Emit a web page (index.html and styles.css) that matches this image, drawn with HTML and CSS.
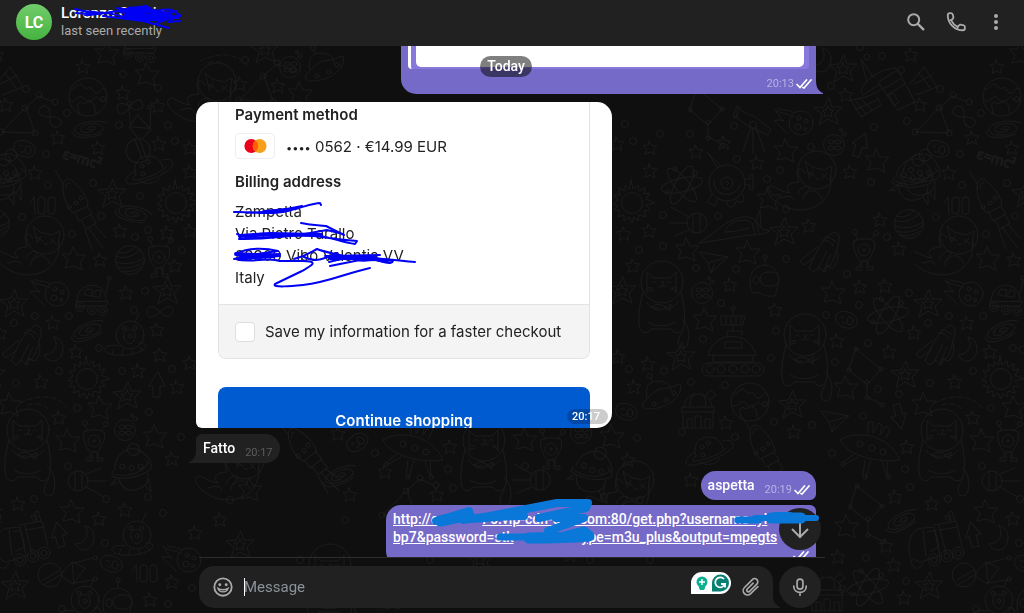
FILE: index.html
```html
<!DOCTYPE html>
<html lang="en">
<head>
<meta charset="utf-8">
<meta name="viewport" content="width=device-width, initial-scale=1">
<title>Chat</title>
<link rel="stylesheet" href="styles.css">
</head>
<body>
<svg class="wallpaper" aria-hidden="true">
  <defs>
    <g id="dot"><circle r="3.5"/></g>
    <g id="star"><path d="M-1-7 1.500-2.500 7-2 3.500 1.500 4.500 6.500 0 4-5 6.500-3.500 1-7-2.500-2-3z"/></g>
    <g id="star-m"><path d="M-1-12 3-4 12-4 6 3 8 11 0 7-9 9-6 1-12-5-4-5z"/></g>
    <g id="star-d"><path d="M1-14 4-5 14-5 7 2 10 12 0 7-9 13-6 2-14-4-4-5z"/><path d="M0-6 2-2 6-2 3 1 4 5 0 3-4 5-3 1-6-2-2-2z"/></g>
    <g id="earth"><circle r="19"/><path d="M-17-8c5 1 5-4 9-5s2 6 8 4 4 6 9 5 4-7 8-4M-18 3c5 5 7-5 12-3s2 5 8 4 4-7 9-2 4 2 7-1M-9 17c0-6-3-9 0-11s4 2 7 0 6-2 8 2-1 8 3 9"/><circle cx="15" cy="2" r="2.500"/></g>
    <g id="galaxy"><path d="M-3 1c2-4 10-3 8 0S-9 7-9 1 12-7 13 0-12 10-15 3 4-10 17-5M-18 3c-1 9 20 7 30 3M3 1c-1 1-3 1-5 0"/></g>
    <g id="planet"><circle r="14.500"/><path d="M-14-4c8 4 18 0 24-6M-12-8c6 2 12 0 17-5M-14 2c12 4 22 0 28-4M-13 7c10 3 20 0 26-5M-9 11c7 2 14 0 20-4"/></g>
    <g id="saturn"><path d="M-14 5c-4-12 4-19 13-19 8 0 13 6 14 12M-10 11c6 4 15 3 20-3"/><path d="M-15 1c-10 5-12 13-5 13 10 1 45-12 43-21-1-4-6-4-11-3M-14 5c-4 3-4 5-1 5 9 0 28-8 31-13"/><circle cx="-8" cy="-4" r="2"/><circle cx="-2" cy="-8" r="2"/><circle cx="-7" cy="4" r="2"/></g>
    <g id="sun"><circle r="10.500"/><path d="M-1-23 1-14 6-18 7-12 13-15 12-9 18-10 14-4 23 0 14 2 18 7 12 8 14 14 7 12 6 18 2 14 0 20-3 14-8 18-8 12-14 14-12 8-18 7-14 3-19 1-14-3-18-8-12-8-13-15-7-12-7-18-3-14z"/></g>
    <g id="alien"><path d="M-10-9c5-3 16-3 20 0 3 8-4 15-6 20v6h5v3H3v-9h-5v9h-6v-3h4v-6c-4-5-8-14-6-20zM-6-10-9-16M6-10 11-15"/><circle r="6"/><circle r="1"/><circle cx="-9" cy="-18" r="2.500"/><circle cx="12" cy="-17" r="2.500"/><path d="M-2 10c1 1 3 1 4 0"/></g>
    <g id="cat"><circle cy="-15" r="21"/><path d="M-15-4V-25l6 6H8l6-6v21M-10-14c1-2 3-2 4 0M5-14c1-2 3-2 4 0M-1-15h3l-2 3c-1 3-3 2-4 1M0-12c1 3 3 2 4 1M-14-9h5M-14-6l5-1M9-9h5M9-8l5 2M-19-5c-3 11-6 27-3 37 3 5 8 5 11 0H9c3 5 9 5 12 0 3-11 1-25-2-37M-16 5c4 6 10 7 14 6M16 5c-4 6-10 7-14 6M-10 10c5-4 9-3 14 0l5-3-1 7-5-3c-5 3-9 3-13-1zM-14 25c8 5 19 5 27 0M20 22c10 8 8 29 1 29s-6-10 0-17"/></g>
    <g id="catfly"><circle cx="5" cy="-10" r="19"/><path d="M-3-4-7-19l7 6 12 3 8-4-2 15M-4-8l7 4M1-9l-4 7M10-6l6 5M15-7l-5 6M4-2l2 2 2-2M-7-7c-9-11-9 2-6 9-8 0-16 4-9 11-11-1-19-11-22-5s10 17 20 20c23 7 45-6 43-31M-14 14c1-6 8-10 12-6-8 8-7 10-7 12M-7 15c8-8 13-4 17 4M-18 20c-3-7-11-2-14-2"/></g>
    <g id="rocket"><path d="M-12-14c0-8 4-11 8-8 9 6 17 18 17 26L-2 11c-5-5-10-14-10-25zM-9-14c0-4 2-6 4-5M0 11l4 8 13-7-5-8M6 18l5 9 10-6-5-8M10 28l7 19M14 26l14 20M19 22l12 14M-12-18-20-32"/><circle cx="-6" cy="5" r="2"/><circle cx="1" cy="1" r="2"/><circle cx="6" cy="-4" r="2"/></g>
    <g id="shuttle"><path d="M-14 13C-7-4 2-20 12-23c5 2 5 8 2 16-2 9-4 14-8 19M-1-15c4-1 9 2 11 6M2-18c4 0 8 2 11 5M-6-8-23 6l4 4 11-8M14-5c3 9-2 15-4 18l-7-2M-5 14 4-4M0 17 8-1M-14 13l5 4 5-5 6 5 3-7"/></g>
    <g id="moon"><path d="M2-12c5 9 1 17-10 18 4 8 15 8 18-1S9-11 2-12z"/></g>
    <g id="moonface"><circle r="10.500"/><ellipse cx="-3" cy="-3" rx="3" ry="2"/><ellipse cx="4" cy="-3" rx="3" ry="2"/><ellipse cx="-3" cy="3" rx="3" ry="2"/><ellipse cx="4" cy="3" rx="3" ry="2"/><circle cx="7" cy="-15" r="1.500"/><circle cx="10" cy="-11" r="2"/></g>
    <g id="bean"><path d="M-10-6c3-6 17-1 19 3s2 10-5 11S-16 4-10-6z"/><ellipse cx="3" cy="1" rx="3" ry="4"/><path d="M-6-3h3M-5 2c1 2 3 2 4 0"/></g>
    <g id="saucer"><path d="M-17-3c2-12 9-16 16-18s17 4 21 17M-19-2c-3 4-2 6 1 6 14 7 40 1 38-5-1-4-3-3-5-6M-18 1c12 6 28 4 35-5M-15 6c2 13 10 15 17 14s13-5 13-14M-17 6l-7 5 7-1M10 17l5 8 0-13"/><circle cx="5" cy="-20" r="6"/><circle cx="-9" cy="-5" r="2.500"/><circle cx="0" cy="-2" r="2.500"/><circle cx="9" cy="-2" r="2.500"/></g>
    <g id="ufo"><path d="M-30-10c20-12 50-3 60 20-20 3-52-3-60-20zM-2-16v-12h5v11M4-17l4-10 4 2-2 9M10-15l6-9 4 3-4 9M-16 4l-10 8M-12 7l-14 8M-5 10l-2 15M1 10l-5 17M12 12l5 14M17 12l1 14"/><circle cx="-10" cy="-6" r="3"/><circle cx="2" cy="-2" r="3"/><circle cx="13" cy="2" r="3"/><circle cx="-27" cy="14" r="2"/><circle cx="-5" cy="27" r="2"/><circle cx="18" cy="27" r="2"/></g>
    <g id="miniufo"><path d="M-19 9C-10-2-5-3-3-5c9 0 14-3 21-5 4 10-11 25-31 25-6 0-7-3-6-6zM-15 4c-3-12 3-17 11-17s14 4 13 11M-10-13l-1-3"/><circle cx="-12" cy="-18" r="2.500"/><circle cx="-8" cy="10" r="2"/><circle cx="4" cy="6" r="2"/><circle cx="12" cy="-1" r="2"/></g>
    <g id="meteor"><path d="M-3-6c-8-5-10-1-19-8 6 9 4 8 9 12-7-2-6 0-10-1 7 8 10 9 14 14M-3-10c-8-5-12-1-15-5"/><circle cx="4" r="12"/><circle cx="2" cy="-5" r="2"/><circle cx="9" cy="-2" r="2"/><circle cx="1" cy="4" r="3"/><circle cx="8" cy="6" r="1.500"/></g>
    <g id="rover"><path d="M-15 3c0-21 30-21 29 0zM-8-4l3-5 6 1-2 6zM1-2l3-6 5 1-1 6zM-16 3v5h30l2-5M14-4l3-14"/><circle cx="-12" cy="9" r="4.500"/><circle cy="12" r="4.500"/><circle cx="11" cy="13" r="4.500"/><circle cx="-12" cy="9" r="2"/><circle cy="12" r="2"/><circle cx="11" cy="13" r="2"/><circle cx="17" cy="-20" r="2"/></g>
    <g id="tank"><path d="M-25 5c6-25 42-25 48 0zM-20 5v7h40V5M-6-14v-5H9v5M0-19v-8M-12-34H12l-2 9h-21zM-7-34v8M-2-33v7M3-33v7M8-33v7M0-35v-5M-8-8H9v6H-8z"/><rect x="-31" y="13" width="62" height="13" rx="6"/><circle cx="-23" cy="19" r="4"/><circle cx="-12" cy="19" r="4"/><circle cy="19" r="4"/><circle cx="12" cy="19" r="4"/><circle cx="23" cy="19" r="4"/><circle cy="-42" r="2"/></g>
    <g id="truck"><path d="M-29 12c-4-20 4-29 14-29l10-1 6 29-20 6zM-16-15l3 26M-12-13l8-2 4 17-9 4M-5-20l22-4 6 25M0-19l7 27M1-15l18-3M8-24l-2-5 3-1 2 6M12-24l-2-9 3-1 3 10M-28 15c1 10 9 11 12 3"/><circle cx="-5" cy="15" r="6"/><circle cx="8" cy="11" r="6"/><circle cx="19" cy="8" r="6"/><circle cx="-5" cy="15" r="3"/><circle cx="8" cy="11" r="3"/><circle cx="19" cy="8" r="3"/></g>
    <g id="astropod"><circle r="14"/><path d="M-11 11c-15-3-18 5-9 8 12 3 26 0 33-4 7-5-1-9-4-7M-16 14l-2 5M-7 14l-1 6M2 15l1 5M10 12l3 4M5-13l4-9"/><path d="M-6 2c-3-10 13-10 11 0s-9 8-11 0z"/><circle cy="1" r="2"/><circle cx="-6" cy="-7" r="2"/><circle cx="5" cy="-7" r="2"/></g>
    <g id="orb"><circle r="18"/><circle r="6"/><path d="M-13-2c-1 17 23 18 26 3M-9-15-20-31l14 14M18-4h5v-5h3V7h-3V2h-5M-15 11l-5 8 8 4 3-7M0 18c-1 8 8 8 9 0 8 4 9-2 7-6M-1-2l3 2-2 2"/></g>
    <g id="probe"><circle r="10"/><path d="M-3-10v19M4-10v19M8-7l15-6M10 0h18M8 6l18 10"/></g>
    <g id="atom"><ellipse rx="21" ry="7" transform="rotate(-12)"/><ellipse rx="21" ry="7" transform="rotate(50)"/><ellipse rx="21" ry="7" transform="rotate(-62)"/><circle cx="-15" cy="7" r="2"/><circle cx="13" cy="-12" r="2.500"/><circle cx="-7" cy="-16" r="2"/></g>
    <g id="satellite"><path d="M-12-8 8-20 25 12 8 20zM-10-6-27 5c-8-8 15-27 33-27l3 4M-23-7l-6-24 12 18M-9 0-24 7l-15 3 10 17 20-12-4-8M20-6l14-17 13 20-21 8M-34 11l10 13M-29 9l12 12M-35 20l22-10M29-17l11 15M24-6l18-9M-1 5l4-2 6 9-4 3zM-7-1l19-11M-3 5l18-11"/><circle cx="-23" cy="-33" r="3"/></g>
    <g id="lamp"><circle cx="-10" cy="5" r="12"/><path d="M-17 10 0 0M-15 14 2 4M2 3 12-8l13 6L13 14 3 7M12-8l2 21M14-7l19-5M14 13l19-3"/><circle cx="35" cy="-12" r="2"/><circle cx="35" cy="9" r="2"/></g>
    <g id="observ"><path d="M-14 0c0-17 28-17 28 0M-8-1c0-10 4-12 5-13M8-1c0-10-4-12-5-13M-16 0h32v5h-32zM-15 5v16h30V5M-11 20v-8h5v8M-3 20V9h6v11M7 20v-8h5v8M8-12l5-5 5 5-6 5"/></g>
    <g id="scope"><path d="M-15-14 2-6 18 6l-3 6L-3 4l-13-9zM-16-5l-4-2 4-10 4 2M-2 4-10 28M0 5v25M3 5l9 24M-15-10l-3 5"/><circle cy="2" r="3.500"/></g>
    <g id="plane"><path d="M-17-7 11-2-6 14-9 4zM11-2-9 4M-6 14l3-8"/></g>
    <g id="arrow"><path d="M1-13 8 1 3 1v11h-7V1h-4z"/></g>
    <g id="infinity"><path d="M0 0c6-7 13-7 13-1S5 7 0 0-13-7-13 0-6 6 0 0z"/></g>
    <g id="hundred"><path d="M-10-8-14-2M-10-8l1 17"/><rect x="-6" y="-8" width="7" height="17" rx="3"/><rect x="4" y="-8" width="7" height="17" rx="3"/></g>
    <g id="tri"><path d="M-22 15 1-9 15-21 29-15M2-9l9 25-33-1"/><circle cx="-23" cy="15" r="3"/><circle cx="1" cy="-9" r="3"/><circle cx="15" cy="-22" r="3"/><circle cx="31" cy="-15" r="3"/><circle cx="11" cy="16" r="3"/></g>
    <g id="kite"><path d="M-8-21 17-1 3 15-15 0zM3 15v12l14 7"/><circle cx="-8" cy="-21" r="2"/><circle cx="17" cy="-1" r="2"/><circle cx="3" cy="12" r="2"/><circle cx="-15" r="2"/><circle cx="3" cy="28" r="2"/><circle cx="18" cy="35" r="2"/></g>
    <g id="helmet"><path d="M-13 12c-4-10-3-25 12-27 12 0 17 12 14 20l-3 11H2l-7-3zM0-15v-6"/><rect x="-5" y="-8" width="19" height="14" rx="7"/><ellipse cx="-9" rx="3" ry="4"/><circle cy="-23" r="2"/></g>
    <g id="jet"><path d="M-36 13C-18 2-10-10 8-13c9-1 14 4 19 12l8 2c-7 5-18 3-27 5zM20-7l5-13 1 17M-10 2c3-12 20-14 26-10M-10 2c8 0 18-2 24-4M17-7l3 11M22-6l2 9"/></g>
    <g id="trail"><path stroke-dasharray="5 3" d="M-20 3C0-7 18-4 27 7M-12 5C-4 2 4 4 9 10"/></g>
    <pattern id="space" width="914" height="613" patternUnits="userSpaceOnUse"><g id="doodles"></g></pattern>
  </defs>
  <rect width="100%" height="100%" fill="url(#space)"/>
</svg>

<div class="app">
  <header class="topbar">
    <div class="avatar">LC</div>
    <div class="peer">
      <h1 class="peer-name">Lorenzo C<span class="gap-name"></span>io
        <svg class="ink ink-name" viewBox="70 0 116 32" aria-hidden="true"><g fill="none" stroke="#0000f5" stroke-width="2" stroke-linecap="round" stroke-linejoin="round"><path d="M75 9c14 5 30 1 49 8 12 4 25 2 33 3l23-5M76 13c18 3 50-3 72-6M85 15c20 0 45-8 62-9l2 6c9-1 15-4 23-2l9 6-22 1M103 16l40 5 26 7M121 11l18-4-12 8 23-7-14 11 25-8-14 10 21-8-11 10 21-8-10 7 12-1M117 8l30 4-21 4 33-2-25 5 42-8-26 6 29 1"/><path stroke-width="5" d="M121 11h29l20 4M126 16l34 3M130 9l18 1"/></g></svg>
      </h1>
      <p class="peer-status">last seen recently</p>
    </div>
    <nav class="actions">
      <button class="icon-btn" aria-label="Search"><svg viewBox="0 0 24 24"><circle cx="9.500" cy="9.500" r="6" fill="none" stroke="currentColor" stroke-width="2.200"/><path d="m14 14 6 6" stroke="currentColor" stroke-width="2.600" stroke-linecap="round"/></svg></button>
      <button class="icon-btn" aria-label="Call"><svg viewBox="0 0 24 24"><path d="M3 4.500C3 3 4 2.300 5.500 2.300h1c1.300 0 1.900.8 2.100 2 .2 1.400.7 2.600.5 3.300-.2.900-1.600 1.900-2.400 2.600 1.500 3 4.100 5.600 7.100 7.100.7-.8 1.700-2.200 2.600-2.400.7-.2 1.900.3 3.300.5 1.200.2 2 .8 2 2.100v1c0 1.500-.7 2.500-2.200 2.500C10.500 21 3 13.500 3 4.500z" fill="none" stroke="currentColor" stroke-width="2"/><path d="m4.500 10.500 2.800-1M13.500 19.500l1-2.800" stroke="currentColor" stroke-width="1.500"/></svg></button>
      <button class="icon-btn" aria-label="More"><svg viewBox="0 0 24 24" fill="currentColor"><circle cx="12" cy="5.500" r="2.200"/><circle cx="12" cy="12" r="2.200"/><circle cx="12" cy="18.500" r="2.200"/></svg></button>
    </nav>
  </header>

  <main class="chat">
    <div class="day">Today</div>
    <div class="messages">
      <article class="bubble out preview">
        <div class="quote"><div class="quote-image"></div></div>
        <span class="meta">20:13<svg class="ticks" viewBox="0 0 16 10"><path d="m1 5.500 3 3 6.500-7.500M7 8.500l1 .5L15 1"/></svg></span>
        <svg class="tail tail-right" viewBox="0 0 7 14"><path d="M0 0c0 7 2 11 7 13v1H0z"/></svg>
      </article>

      <article class="photo">
        <section class="checkout">
          <h2 class="label">Payment method</h2>
          <div class="pay-row">
            <span class="card"><svg viewBox="0 0 40 26" aria-label="Mastercard"><circle cx="16" cy="13" r="7.500" fill="#eb001b"/><circle cx="25" cy="13" r="7.500" fill="#f79e1b"/><path d="M20.500 7a7.500 7.500 0 0 1 0 12 7.500 7.500 0 0 1 0-12z" fill="#ff5f00"/></svg></span>
            <span><span class="mask">••••</span> 0562 · €14.99 EUR</span>
          </div>
          <h2 class="label">Billing address</h2>
          <address class="address">Zampetta<br>Via Pietro Tarallo<br>89900 Vibo Valentia VV<br>Italy
            <svg class="ink ink-address" viewBox="230 196 190 94" aria-hidden="true"><g fill="none" stroke="#0000f5" stroke-width="2" stroke-linecap="round" stroke-linejoin="round"><path d="M234 211c17-1 35 4 53-1 14-3 26-8 33-8l1 2M247 212c20-1 38-3 55-7l-35 7 25-3-20 1M301 222c9 2 18 2 25 3l18 9M237 233c20 8 50 0 67 0 20 0 35 8 51 10l2-3c-12-1-28-3-43-5-20-3-40 4-75 3M245 236c20-8 40 2 65-4l17-3 16 4M236 253c12-7 30-6 42-3l-28 4 30-1M234 258c15-4 30-6 46-3l-44 3c15 5 30-3 44 2h22c20 0 7 6 0 10l-27 13c-4 4 18 2 28 1 27-3 40-11 67-17M294 258c12-3 17-7 23-10 9 4 29 6 39 11 12 3 35-4 37 1-1 5-16-1-24-4M304 256c12 6 20 2 33-4M325 255l55-1M329 261c24-8 53-3 86 0M330 265l35-7 28 2"/><path stroke-width="4" d="M240 235l30-2 51 1M236 253l38 2-34 2M264 211l24-2M330 257l45 0M365 256l20 4"/></g></svg>
          </address>
          <label class="save"><input type="checkbox" class="save-box">Save my information for a faster checkout</label>
        </section>
        <button class="continue">Continue shopping</button>
        <span class="photo-time">20:17</span>
      </article>

      <article class="bubble in">Fatto<span class="meta">20:17</span>
        <svg class="tail tail-left" viewBox="0 0 7 14"><path d="M7 0c0 7-2 11-7 13v1h7z"/></svg>
      </article>

      <article class="bubble out short">aspetta<span class="meta">20:19<svg class="ticks" viewBox="0 0 16 10"><path d="m1 5.500 3 3 6.500-7.500M7 8.500l1 .5L15 1"/></svg></span></article>

      <article class="bubble out long">
        <a class="link" href="#">http://c<span class="gap-host"></span>F5.vip-cdn-u4k.com:80/get.php?username=yl<br>bp7&amp;password=stk<span class="gap-pass"></span>ype=m3u_plus&amp;output=mpegts</a>
        <span class="meta end"><svg class="ticks" viewBox="0 0 16 10"><path d="m1 5.500 3 3 6.500-7.500M7 8.500l1 .5L15 1"/></svg></span>
      </article>
    </div>
    <button class="to-bottom" aria-label="Go to bottom"><svg viewBox="0 0 24 24"><path d="M12 3v17M4 12l8 8 8-8"/></svg></button>
    <svg class="ink ink-link" viewBox="430 495 392 52" aria-hidden="true"><g fill="none" stroke="#0a78d8" stroke-linecap="round" stroke-linejoin="round"><path stroke-width="8" d="M436 521l33-10-6 9 27-4 67-13h31l-2 5-47 10M464 519c20 0 40-4 60-3M556 518h28l-36 13"/><path stroke-width="7" d="M500 537h38l46-1M738 520h21"/><path stroke-width="11" d="M440 521l29-6M529 538c20 0 35 0 60-2l-5-4-17 4M771 518h30"/><path stroke-width="6" d="M755 518h61M776 515h14"/></g></svg>
  </main>

  <footer class="composer">
    <div class="field">
      <button class="icon-btn" aria-label="Emoji"><svg viewBox="0 0 24 24"><circle cx="12" cy="12" r="9.500" fill="none" stroke="currentColor" stroke-width="2"/><circle cx="8.500" cy="9.500" r="1.600" fill="currentColor"/><circle cx="15.500" cy="9.500" r="1.600" fill="currentColor"/><path d="M6.500 13.500c1.500 5 9.500 5 11 0-3 2-8 2-11 0z" fill="none" stroke="currentColor" stroke-width="1.500"/></svg></button>
      <input class="entry" type="text" placeholder="Message" aria-label="Message">
      <span class="assist" aria-hidden="true"><svg viewBox="0 0 40 22"><path d="M0 22V11A11 11 0 0 1 11 0h18a11 11 0 0 1 0 22z" fill="#fff"/><circle cx="11" cy="10" r="5.500" fill="#0bb093"/><path d="M11 7v6M8 10h6" stroke="#fff" stroke-width="1.500"/><path d="M8 14h6v2l-1 2H9l-1-2z" fill="#0bb093"/><path d="M21 19v-8a8.500 8.500 0 1 1 8.500 8.500H21z" fill="#087f73"/><path d="M33 7a5 5 0 1 0 1 5h-4M34 12v3.500" fill="none" stroke="#fff" stroke-width="1.800"/></svg></span>
      <button class="icon-btn" aria-label="Attach"><svg viewBox="0 0 24 24"><path d="m19.500 11.500-7.800 7.800a4.800 4.800 0 0 1-6.800-6.800l8.600-8.600a3.400 3.400 0 0 1 4.900 4.900l-8.200 8.100a1.800 1.800 0 0 1-2.500-2.500l6.600-6.600" fill="none" stroke="currentColor" stroke-width="1.800" stroke-linecap="round"/></svg></button>
      <svg class="tail tail-field" viewBox="0 0 7 14"><path d="M0 0c0 7 2 11 7 13v1H0z"/></svg>
    </div>
    <button class="mic" aria-label="Record voice message"><svg viewBox="0 0 24 24" fill="none" stroke="currentColor" stroke-width="2" stroke-linecap="round"><rect x="8.500" y="2.500" width="7" height="12" rx="3.500"/><path d="M4.500 11c0 10 15 10 15 0M12 18.500V22"/></svg></button>
  </footer>
</div>
<script src="script.js"></script>
</body>
</html>
```

FILE: styles.css
```css
* { box-sizing: border-box; }

body {
  margin: 0;
  background: #0f0f0f;
  color: #fff;
  font-family: Roboto, "Liberation Sans", sans-serif;
  font-size: 14px;
}

h1, h2, p { margin: 0; }

button {
  border: 0;
  padding: 0;
  background: none;
  color: inherit;
  font: inherit;
  cursor: pointer;
}

.wallpaper {
  position: fixed;
  inset: 0;
  width: 100%;
  height: 100%;
}

#doodles {
  fill: none;
  stroke: #1b1b1b;
  stroke-width: 1;
  stroke-linejoin: round;
  stroke-linecap: round;
}

.formula { font: 14px "Open Sans", sans-serif; }

.app {
  position: relative;
  display: flex;
  flex-direction: column;
  height: 100vh;
}

.topbar {
  display: flex;
  align-items: center;
  gap: 9px;
  padding: 4px 17px 6px 16px;
  background: #212121;
}

.avatar {
  display: grid;
  place-items: center;
  width: 36px;
  height: 36px;
  border-radius: 50%;
  background: linear-gradient(#72cc6c, #45b340);
  font-size: 16px;
  font-weight: 700;
}

.peer { flex: 1; }

.peer-name {
  position: relative;
  font-size: 15px;
  line-height: 18px;
  font-weight: 500;
}

.peer-status {
  color: #aaa;
  font-size: 13px;
  line-height: 18px;
}

.gap-name { display: inline-block; width: 24px; }
.gap-host { display: inline-block; width: 44px; }
.gap-pass { display: inline-block; width: 68px; }

.ink {
  position: absolute;
  pointer-events: none;
}

.ink-name { left: 9px; top: -4px; width: 116px; height: 32px; }
.ink-address { left: -5px; top: -4px; width: 190px; height: 94px; }
.ink-link { left: 50%; bottom: 10px; width: 392px; height: 52px; margin-left: -82px; }

.actions { display: flex; gap: 18px; }

.icon-btn { flex: none; width: 22px; height: 22px; color: #aaa; }
.icon-btn svg { display: block; width: 100%; height: 100%; }

.chat {
  position: relative;
  flex: 1;
  min-height: 0;
  display: flex;
  justify-content: center;
  padding-right: 12px;
}

.messages {
  display: flex;
  flex-direction: column;
  align-items: flex-start;
  width: 100%;
  max-width: 620px;
  overflow: hidden;
  padding: 0 8px;
  margin: 0 -8px;
  box-sizing: content-box;
}

.day {
  position: absolute;
  z-index: 1;
  top: 10px;
  padding: 0 7px;
  border-radius: 11px;
  background: rgba(0, 0, 0, 0.5);
  font-weight: 500;
  line-height: 21px;
}

.bubble {
  position: relative;
  flex: none;
  display: flex;
  padding: 4px 7px;
  font-size: 14px;
  font-weight: 500;
  line-height: 21px;
}

.out { align-self: flex-end; background: #766ac8; }
.in { margin-top: 6px; border-radius: 6px 15px 15px 0; background: #212121; }
.short { margin-top: 8px; border-radius: 15px 15px 6px 15px; }
.long { flex-direction: column; margin-top: 5px; padding: 5px 7px; border-radius: 15px 6px 0 15px; line-height: 18px; width: 430px; }

.preview {
  flex-direction: column;
  align-items: flex-end;
  width: 415px;
  padding: 0 4px 0 7px;
  border-radius: 0 0 0 15px;
}

.quote {
  align-self: stretch;
  margin-right: 3px;
  padding: 0 5px 2px;
  border-left: 3px solid #fff;
  border-radius: 0 0 4px 4px;
  background: #8878dc;
}

.quote-image { height: 21px; border-radius: 0 0 5px 5px; background: #fff; }

.meta {
  display: flex;
  align-items: center;
  align-self: flex-end;
  gap: 2px;
  margin-left: 10px;
  color: #b9b2e4;
  font-size: 11px;
  font-weight: 400;
  line-height: 13px;
}

.in .meta { color: #5c5c5c; }
.preview .meta { margin-top: 4px; line-height: 21px; }
.short .meta { margin-right: -1px; }

.ticks {
  width: 16px;
  height: 10px;
  fill: none;
  stroke: #fff;
  stroke-width: 1.700;
  stroke-linecap: round;
}

.tail { position: absolute; bottom: 0; width: 7px; height: 14px; fill: #766ac8; }
.tail-right { right: -7px; }
.tail-left { left: -7px; fill: #212121; }
.tail-field { right: -7px; fill: #212121; }

.photo {
  position: relative;
  flex: none;
  display: flex;
  flex-direction: column;
  width: 416px;
  height: 326px;
  margin-top: 8px;
  padding: 0 22px;
  overflow: hidden;
  border-radius: 15px 15px 15px 6px;
  background: #fff;
  color: #222;
  font-family: Inter, sans-serif;
  font-size: 15px;
}

.checkout {
  border: 1px solid #e2e2e2;
  border-top: 0;
  border-radius: 0 0 8px 8px;
  padding: 2px 16px 0;
}

.label { font-size: 15px; line-height: 22px; font-weight: 600; }

.pay-row { display: flex; align-items: center; gap: 11px; margin: 7px 0 12px; }
.mask { font-size: 11px; }
.card { width: 40px; height: 26px; border: 1px solid #eee; border-radius: 4px; }
.card svg { display: block; width: 100%; height: 100%; }

.address {
  position: relative;
  margin-top: 8px;
  font-style: normal;
  line-height: 22px;
}

.save {
  display: flex;
  align-items: center;
  gap: 10px;
  margin: 15px -16px 0;
  padding: 16px;
  border-top: 1px solid #e2e2e2;
  border-radius: 0 0 8px 8px;
  background: #f4f4f4;
  line-height: 21px;
}

.save-box {
  appearance: none;
  width: 20px;
  height: 20px;
  margin: 0;
  border: 1px solid #dedede;
  border-radius: 4px;
  background: #fff;
}

.continue {
  flex: none;
  height: 66px;
  margin-top: 28px;
  border-radius: 8px;
  background: #005bd1;
  color: #fff;
  font-weight: 600;
}

.photo-time {
  position: absolute;
  right: 4px;
  bottom: 4px;
  padding: 0 8px 0 5px;
  border-radius: 8px;
  background: rgba(0, 0, 0, 0.2);
  color: #fff;
  font: 500 11px/15px Roboto, sans-serif;
}

.link { color: #fff; text-decoration: underline; white-space: nowrap; }
.long .end { margin-top: 5px; }

.to-bottom {
  position: absolute;
  left: 50%;
  bottom: 7px;
  width: 42px;
  height: 42px;
  margin-left: 267px;
  padding: 9px;
  border-radius: 50%;
  background: #212121;
  color: #aaa;
}

.to-bottom svg { display: block; fill: none; stroke: #aaa; stroke-width: 2; }

.composer {
  display: flex;
  align-items: center;
  gap: 6px;
  align-self: center;
  width: 100%;
  max-width: 626px;
  padding: 8px 4px 5px 0;
  border-top: 1px solid #2c2c2c;
}

.field {
  position: relative;
  flex: 1;
  display: flex;
  align-items: center;
  height: 42px;
  padding: 0 11px 0 13px;
  border-radius: 15px 15px 0 15px;
  background: #212121;
}

.entry {
  flex: 1;
  min-width: 0;
  border: 0;
  padding: 0;
  margin-left: 10px;
  outline: 0;
  background: linear-gradient(#fff, #fff) left center / 1px 18px no-repeat;
  color: #fff;
  font: 15px/20px Roboto, sans-serif;
}

.entry::placeholder { color: #8c9299; opacity: 1; }

.assist { width: 40px; height: 22px; margin: -8px 9px 0 0; }
.assist svg { display: block; }

.mic {
  width: 42px;
  height: 42px;
  padding: 11px;
  border-radius: 50%;
  background: #212121;
  color: #aaa;
}

.mic svg { display: block; }
```

FILE: script.js
```js
const layout = {
  dot: "26,89 123,74 158,88 67,113 119,125 168,125 46,154 175,141 48,185 93,183 140,196 22,217 101,216 72,234 135,237 148,230 182,250 145,291 134,310 69,316 35,316 14,323 99,348 59,371 16,383 122,371 172,369 77,408 149,412 181,437 68,466 34,499 106,499 148,497 163,513 105,543 192,588 168,604 62,609 860,47 882,56 901,70 831,86 874,127 907,121 871,182 887,237 847,274 909,293 826,315 859,305 868,343 835,362 878,389 899,394 863,416 832,453 905,469 910,487 866,558 842,589 906,581 625,124 633,141 660,134 690,134 734,126 811,147 737,159 780,170 663,215 718,216 786,209 767,179 663,246 639,250 696,268 736,269 786,259 721,303 703,339 776,331 771,358 629,369 664,371 691,382 725,385 774,422 812,425 637,438 682,432 735,437 245,60 375,453 448,469 525,466 604,497 453,488 230,500 345,520 640,500 300,560 530,600 430,560 590,560 650,560",
  star: "83,67 123,93 158,106 6,105 58,138 98,148 159,144 190,148 35,173 190,172 120,231 167,233 190,231 175,266 100,260 126,293 53,323 76,352 157,330 160,355 190,363 41,382 138,371 177,387 59,418 172,459 18,504 125,510 99,519 172,582 150,600 195,533 911,55 846,95 850,172 880,220 899,249 860,287 885,286 837,341 914,333 889,352 907,447 895,497 886,546 838,557 894,565 904,598 617,144 650,148 696,152 724,143 757,163 650,171 809,226 624,234 649,231 633,266 730,285 775,310 648,364 618,357 634,387 726,423 794,432 628,460 240,84 278,86 338,434 450,447 437,495 385,472 691,480 220,520 350,495 270,600 570,555 620,600 660,585",
  "star-m": "107,54 147,75 74,259 10,405 68,441 155,437 100,408 72,512 877,161 833,293 846,388 847,527 786,151 769,199 687,250 748,253 705,320 612,437 300,94 525,440 250,490 660,540",
  "star-d": "112,194 14,304 167,291 127,396 15,586 843,69 828,112 905,375 784,232 622,291 681,357 792,405 265,50 240,545 480,560",
  earth: "88,97 750,402", galaxy: "90,128 134,213,20 88,330,-15 902,520,-20 340,475,-15",
  planet: "130,260 909,224", saturn: "150,170 710,451", sun: "176,203 87,379 632,203",
  alien: "159,257 94,441 864,250 551,449", moon: "52,349 83,538 820,60", moonface: "125,430 834,145 702,293 290,67 581,433",
  bean: "25,149 112,564 847,320 627,412 358,442,-50", saucer: "6,175 132,470,-10 913,180 592,472,10", ufo: "870,450 413,450",
  miniufo: "325,66 662,394", meteor: "53,294 185,560 797,123", rover: "92,298 140,45", tank: "733,350", truck: "25,545",
  astropod: "137,535 130,335 85,600", orb: "727,183", probe: "78,481 697,223,180 540,480,180", atom: "682,185 888,315 868,587",
  satellite: "890,90", lamp: "135,140,-80 60,570", observ: "827,590 698,407", scope: "753,123", plane: "838,418 717,259",
  arrow: "157,385 59,535,-15 860,145,20 899,416,165", infinity: "50,117,45 130,107,-12 160,312", hundred: "44,205 146,573 390,600",
  tri: "24,117 262,85 405,500", kite: "864,370 705,110 865,507", helmet: "765,280 118,603", jet: "735,230",
  rocket: "75,202 303,450,-10 762,448", shuttle: "25,348 823,255", trail: "40,400 220,58",
  cat: "28,445 484,455 662,297 805,350 330,580", catfly: "40,245 212,92 812,180 630,490 240,470"
};
const ns = "http://www.w3.org/2000/svg";
const root = document.getElementById("doodles");

function place(id, x, y, angle) {
  const item = document.createElementNS(ns, "use");
  item.setAttribute("href", "#" + id);
  item.setAttribute("transform", `translate(${x} ${y}) rotate(${angle})`);
  root.append(item);
}

for (const [id, spots] of Object.entries(layout)) {
  for (const spot of spots.split(" ")) {
    const [x, y, angle = 0] = spot.split(",").map(Number);
    place(id, x, y, angle);
    if (x < 35) place(id, x + 914, y, angle);
    if (x > 880) place(id, x - 914, y, angle);
  }
}

const formula = document.createElementNS(ns, "text");
formula.setAttribute("class", "formula");
formula.setAttribute("transform", "translate(62 158) rotate(17)");
formula.textContent = "ε=mc²";
root.append(formula);
```
